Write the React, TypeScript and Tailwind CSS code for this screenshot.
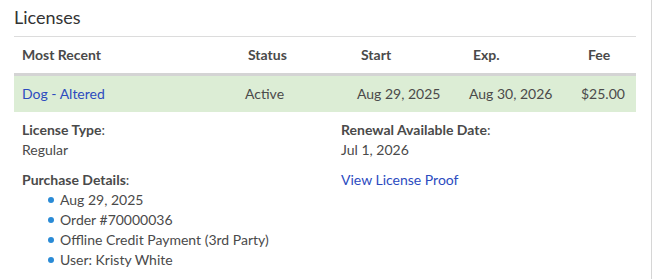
import React from "react";

const font = { fontFamily: "Lato, 'Open Sans', sans-serif" };

export default function App() {
  return (
    <div className="w-[653px] h-[279px] bg-white overflow-hidden" style={font}>
      <div className="w-[652px] h-[279px] border-r border-[#d6d6d6] pl-[14px] pr-[15px]">
        <div className="h-[36px] pt-[6px] text-[18px] leading-[22px] text-[#333333]">Licenses</div>
        <div className="border-t border-[#dcdcdc]">
          <div className="grid grid-cols-[226px_112px_112px_112px_60px] h-[39px] items-center border-b-[3px] border-[#d4d4d4] text-[14px] leading-5 font-bold text-[#4a4a4a]">
            <div className="pl-[8px]">Most Recent</div>
            <div className="pl-[8px]">Status</div>
            <div className="pl-[9px]">Start</div>
            <div className="pl-[9px]">Exp.</div>
            <div className="pl-[12px]">Fee</div>
          </div>
          <div className="grid grid-cols-[226px_112px_112px_112px_60px] h-[36px] items-center bg-[#dcedd5] text-[14px] leading-5 text-[#4a4a4a]">
            <div className="pl-[8px] text-[#2c4bbf]">Dog - Altered</div>
            <div className="pl-[5px]">Active</div>
            <div className="pl-[5px]">Aug 29, 2025</div>
            <div className="pl-[5px]">Aug 30, 2026</div>
            <div className="pl-[5px]">$25.00</div>
          </div>
        </div>
        <div className="grid grid-cols-[319px_1fr] pl-[8px] pt-[8px] text-[14px] leading-5 text-[#4a4a4a]">
          <div>
            <div>
              <span className="font-bold">License Type</span>:
            </div>
            <div>Regular</div>
            <div className="mt-[10px]">
              <span className="font-bold">Purchase Details</span>:
            </div>
            <ul className="pl-[26px]">
              {["Aug 29, 2025", "Order #70000036", "Offline Credit Payment (3rd Party)", "User: Kristy White"].map((t) => (
                <li key={t} className="flex items-center gap-[6px]">
                  <span className="w-[6px] h-[6px] rounded-full bg-[#2a8bd6] inline-block" />
                  <span>{t}</span>
                </li>
              ))}
            </ul>
          </div>
          <div>
            <div>
              <span className="font-bold">Renewal Available Date</span>:
            </div>
            <div>Jul 1, 2026</div>
            <div className="mt-[10px] text-[#2c4bbf]">View License Proof</div>
          </div>
        </div>
      </div>
    </div>
  );
}
